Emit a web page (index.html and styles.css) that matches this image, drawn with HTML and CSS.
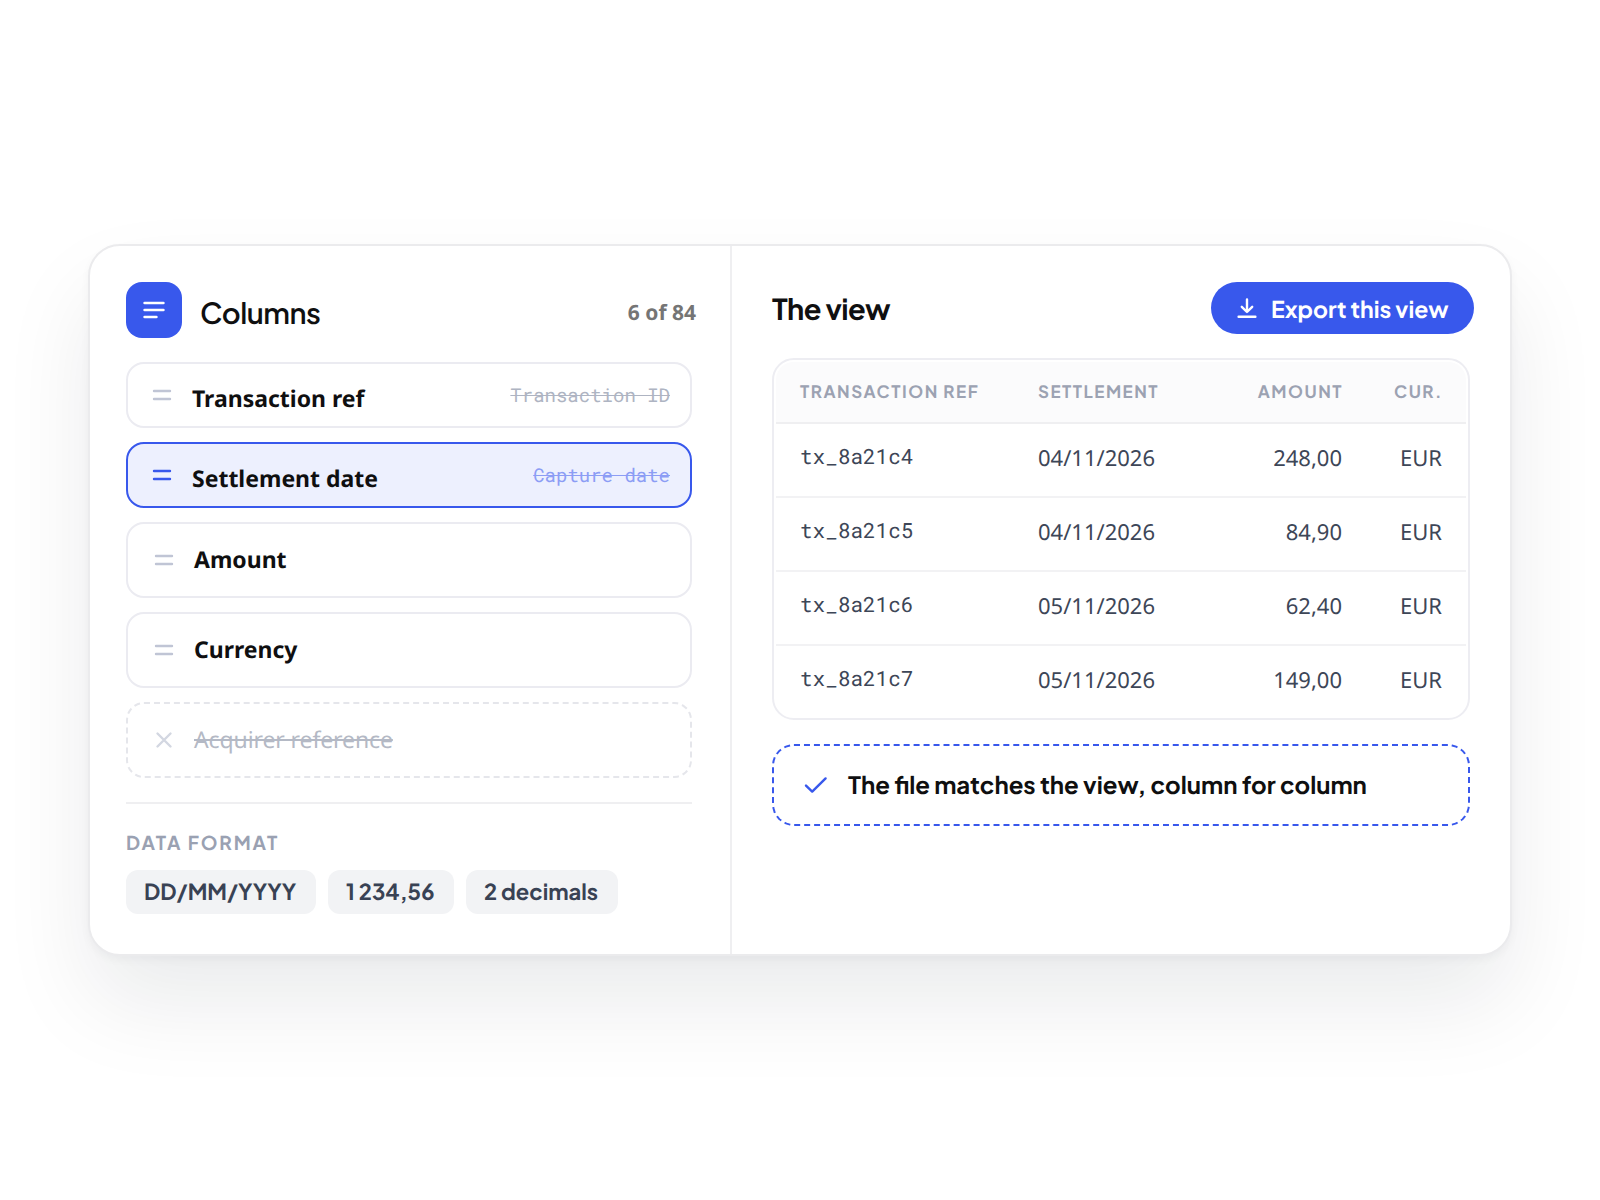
FILE: index.html
```
<!DOCTYPE html>
<html lang="en">
<head>
    <meta charset="UTF-8">
    <meta name="viewport" content="width=device-width, initial-scale=1.0">
    <title>Export columns</title>
    <link rel="stylesheet" href="styles.css">
</head>
<body>
    <div class="card">
        <!-- Column list -->
        <section class="panel columns">
            <div class="columns-head">
                <span class="badge">
                    <svg width="24" height="24" viewBox="0 0 24 24"><path d="M2.6 5h18.8M2.6 12h18.8M2.6 19h11.8"/></svg>
                </span>
                <h2 class="title">Columns</h2>
                <span class="count">6 of 84</span>
            </div>

            <ul class="column-list">
                <li class="column renamed">
                    <svg class="handle" width="20" height="20" viewBox="0 0 20 20"><path d="M2 6h16M2 14h16"/></svg>
                    <span class="name">Transaction ref</span>
                    <span class="old-name">Transaction ID</span>
                </li>
                <li class="column renamed active">
                    <svg class="handle" width="20" height="20" viewBox="0 0 20 20"><path d="M2 6h16M2 14h16"/></svg>
                    <span class="name">Settlement date</span>
                    <span class="old-name">Capture date</span>
                </li>
                <li class="column">
                    <svg class="handle" width="20" height="20" viewBox="0 0 20 20"><path d="M2 6h16M2 14h16"/></svg>
                    <span class="name">Amount</span>
                </li>
                <li class="column">
                    <svg class="handle" width="20" height="20" viewBox="0 0 20 20"><path d="M2 6h16M2 14h16"/></svg>
                    <span class="name">Currency</span>
                </li>
                <li class="column removed">
                    <svg class="handle" width="20" height="20" viewBox="0 0 20 20"><path d="M3.5 3.5l13 13M16.5 3.5l-13 13"/></svg>
                    <span class="name">Acquirer reference</span>
                </li>
            </ul>

            <div class="format">
                <h3 class="format-title">DATA FORMAT</h3>
                <div class="chips">
                    <span class="chip chip-date">DD/MM/YYYY</span>
                    <span class="chip chip-number">1 234,56</span>
                    <span class="chip chip-decimals">2 decimals</span>
                </div>
            </div>
        </section>

        <!-- Preview of the export -->
        <section class="panel view">
            <div class="view-head">
                <h2 class="title">The view</h2>
                <button class="export">
                    <svg width="24" height="24" viewBox="0 0 24 24"><path d="M12 3.4v12.4M6.8 10.8l5.2 5.2 5.2-5.2M3.6 20.8h16.8"/></svg>
                    <span>Export this view</span>
                </button>
            </div>

            <div class="table-wrap">
                <table class="table">
                    <thead>
                        <tr>
                            <th class="col-ref">TRANSACTION REF</th>
                            <th class="col-date">SETTLEMENT</th>
                            <th class="col-amount">AMOUNT</th>
                            <th class="col-cur">CUR.</th>
                        </tr>
                    </thead>
                    <tbody>
                        <tr><td class="ref">tx_8a21c4</td><td>04/11/2026</td><td class="num">248,00</td><td class="num">EUR</td></tr>
                        <tr><td class="ref">tx_8a21c5</td><td>04/11/2026</td><td class="num">84,90</td><td class="num">EUR</td></tr>
                        <tr><td class="ref">tx_8a21c6</td><td>05/11/2026</td><td class="num">62,40</td><td class="num">EUR</td></tr>
                        <tr><td class="ref">tx_8a21c7</td><td>05/11/2026</td><td class="num">149,00</td><td class="num">EUR</td></tr>
                    </tbody>
                </table>
            </div>

            <div class="match">
                <svg width="24" height="24" viewBox="0 0 24 24"><path d="M2 12.6l6.2 6L21.6 5.4"/></svg>
                <span>The file matches the view, column for column</span>
            </div>
        </section>
    </div>
</body>
</html>
```
FILE: styles.css
```
* {
    box-sizing: border-box;
}
body {
    margin: 0;
    min-height: 1200px;
    display: flex;
    align-items: center;
    justify-content: center;
    background: #fff;
    color: #0f0f10;
    font-family: "Noto Sans", sans-serif;
    text-rendering: geometricPrecision;
}
h2, h3, ul {
    margin: 0;
    padding: 0;
}
svg {
    flex: none;
    fill: none;
    stroke: currentColor;
    stroke-width: 2.4;
    stroke-linecap: round;
    stroke-linejoin: round;
}
.card {
    width: 1424px;
    height: 712px;
    display: flex;
    border: 2px solid #ebebed;
    border-radius: 32px;
    background: #fff;
    box-shadow: 0 4px 8px rgba(16, 16, 48, 0.04), 0 48px 92px -2px rgba(16, 24, 40, 0.088);
}
.title {
    font-family: "Plus Jakarta Sans", Inter, sans-serif;
    font-size: 29px;
    font-weight: 700;
    line-height: 36px;
    letter-spacing: -0.6px;
}

/* left panel */
.columns {
    width: 642px;
    padding: 36px 38px 0 36px;
    border-right: 2px solid #efeff1;
}
.columns-head {
    display: flex;
    align-items: center;
    height: 56px;
    margin-right: -4px;
}
.badge {
    display: flex;
    align-items: center;
    justify-content: center;
    width: 56px;
    height: 56px;
    margin-right: 18px;
    border-radius: 16px;
    background: #3858ec;
    color: #fff;
}
.badge svg {
    stroke-width: 2.6;
}
.columns-head .title {
    padding-top: 6px;
    font-weight: 650;
    letter-spacing: -0.5px;
}
.count {
    margin-left: auto;
    padding-top: 6px;
    color: #757575;
    font-size: 21px;
    font-weight: 700;
}
.column-list {
    display: flex;
    flex-direction: column;
    gap: 14px;
    margin-top: 24px;
    list-style: none;
}
.column {
    display: flex;
    align-items: center;
    height: 76px;
    padding: 0 20px 0 26px;
    border: 2px solid #ebebf1;
    border-radius: 18px;
}
.handle {
    margin-right: 20px;
    color: #c0c5d5;
}
.name {
    padding-bottom: 2px;
    font-size: 23px;
    font-weight: 700;
    line-height: 30px;
}
.renamed {
    height: 66px;
    padding-left: 24px;
}
.renamed .name {
    padding: 5px 0 0;
}
.old-name {
    margin-left: auto;
    padding-top: 1px;
    color: #aeb4c2;
    font-family: "Roboto Mono", "Liberation Mono", monospace;
    font-size: 19px;
    text-decoration: line-through;
}
.active {
    border-color: #3858ec;
    background: #edf0fe;
}
.active .handle {
    color: #3858ec;
}
.active .old-name {
    color: #8c9df5;
}
.removed {
    border-style: dashed;
    border-color: #e5e6eb;
}
.removed .handle {
    color: #d3d7e1;
}
.removed .name {
    color: #b4b9c5;
    font-weight: 400;
    letter-spacing: -0.1px;
    text-decoration: line-through;
}
.format {
    margin-top: 24px;
    padding-top: 26px;
    border-top: 2px solid #efeff1;
}
.format-title {
    color: #9aa1b2;
    font-family: "Plus Jakarta Sans", Inter, sans-serif;
    font-size: 19px;
    font-weight: 700;
    line-height: 26px;
    letter-spacing: 1.9px;
}
.chips {
    display: flex;
    gap: 12px;
    margin-top: 14px;
}
.chip {
    display: flex;
    align-items: center;
    height: 44px;
    padding: 0 0 2px 18px;
    border-radius: 12px;
    background: #f2f3f5;
    color: #394254;
    font-family: "Plus Jakarta Sans", Inter, sans-serif;
    font-size: 22px;
    font-weight: 700;
    white-space: nowrap;
}
.chip-date {
    width: 190px;
}
.chip-number {
    width: 126px;
}
.chip-decimals {
    width: 152px;
}

/* right panel */
.view {
    flex: 1;
    padding: 36px 40px 0;
}
.view-head {
    display: flex;
    align-items: center;
    justify-content: space-between;
    margin-right: -3.6px;
}
.view-head .title {
    padding-top: 2px;
}
.export {
    display: flex;
    align-items: center;
    width: 262.6px;
    height: 52px;
    padding: 0 0 0 24px;
    border: 0;
    border-radius: 26px;
    background: #3858ec;
    color: #fff;
    font-family: "Plus Jakarta Sans", Inter, sans-serif;
    font-size: 23px;
    font-weight: 700;
    text-rendering: inherit;
    white-space: nowrap;
}
.export span {
    padding: 2px 0 0 12px;
}
.table-wrap {
    height: 362px;
    margin-top: 24px;
    padding: 2px;
    border: 2px solid #ededf2;
    border-radius: 22px;
}
.table {
    width: 100%;
    border-collapse: separate;
    border-spacing: 0;
    table-layout: fixed;
}
.table th {
    height: 62px;
    padding: 0 0 2px 24px;
    border-bottom: 2px solid #efeff1;
    background: #fbfbfc;
    color: #9ca2b2;
    font-family: "Plus Jakarta Sans", Inter, sans-serif;
    font-size: 17px;
    font-weight: 700;
    letter-spacing: 1.5px;
    text-align: left;
    white-space: nowrap;
}
.table th:first-child {
    border-top-left-radius: 18px;
}
.table th:last-child {
    border-top-right-radius: 18px;
}
.table .col-ref {
    width: 238px;
}
.table .col-date {
    width: 179px;
}
.table .col-amount {
    width: 150px;
    padding-left: 0;
    text-align: right;
}
.table .col-cur {
    padding-left: 0;
    padding-right: 23px;
    text-align: right;
}
.table td {
    height: 74px;
    padding: 0 0 5px 24px;
    border-bottom: 2px solid #f2f2f4;
    color: #3d4657;
    font-size: 22px;
}
.table tr:last-child td {
    border-bottom-color: transparent;
}
.table .ref {
    padding-bottom: 9px;
    font-family: "Roboto Mono", "Liberation Mono", monospace;
    font-size: 21px;
}
.table .num {
    padding-left: 0;
    padding-right: 1px;
    text-align: right;
}
.table .num:last-child {
    padding-right: 24px;
}
.match {
    display: flex;
    align-items: center;
    gap: 20px;
    height: 82px;
    margin-top: 24px;
    padding-left: 30px;
    border: 2px dashed #3858ec;
    border-radius: 22px;
    font-family: "Plus Jakarta Sans", Inter, sans-serif;
    font-size: 24px;
    font-weight: 700;
    white-space: nowrap;
}
.match svg {
    color: #3858ec;
}
```
